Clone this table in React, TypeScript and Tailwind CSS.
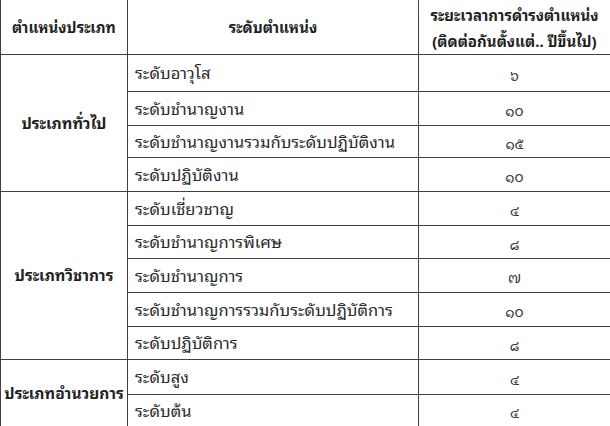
const groups = [
  {
    name: 'ประเภททั่วไป',
    rows: [
      { level: 'ระดับอาวุโส', years: '๖', h: 'h-[37px]' },
      { level: 'ระดับชำนาญงาน', years: '๑๐', h: 'h-[34px]' },
      { level: 'ระดับชำนาญงานรวมกับระดับปฏิบัติงาน', years: '๑๕', h: 'h-[32px]' },
      { level: 'ระดับปฏิบัติงาน', years: '๑๐', h: 'h-[34px]' },
    ],
  },
  {
    name: 'ประเภทวิชาการ',
    rows: [
      { level: 'ระดับเชี่ยวชาญ', years: '๔', h: 'h-[34px]' },
      { level: 'ระดับชำนาญการพิเศษ', years: '๘', h: 'h-[33px]' },
      { level: 'ระดับชำนาญการ', years: '๗', h: 'h-[34px]' },
      { level: 'ระดับชำนาญการรวมกับระดับปฏิบัติการ', years: '๑๐', h: 'h-[34px]' },
      { level: 'ระดับปฏิบัติการ', years: '๘', h: 'h-[33px]' },
    ],
  },
  {
    name: 'ประเภทอำนวยการ',
    rows: [
      { level: 'ระดับสูง', years: '๔', h: 'h-[35px]' },
      { level: 'ระดับต้น', years: '๔', h: 'h-[32px]' },
    ],
  },
]

export default function App() {
  return (
    <div className="w-[610px] h-[426px] bg-white overflow-hidden text-[#1f1f1f] font-['Noto_Sans_Thai_Looped','Tahoma','Noto_Sans_Thai','Noto_Sans',sans-serif]">
      <table className="w-[610px] table-fixed border-collapse leading-tight">
        <colgroup>
          <col className="w-[127px]" />
          <col className="w-[291px]" />
          <col className="w-[192px]" />
        </colgroup>
        <thead>
          <tr className="h-[54px] text-[15px]">
            <th className="border-x border-b border-[#3f3f3f] font-bold text-center align-middle">ตำแหน่งประเภท</th>
            <th className="border-x border-b border-[#3f3f3f] font-bold text-center align-middle">ระดับตำแหน่ง</th>
            <th className="border-x border-b border-[#3f3f3f] font-bold text-center align-middle leading-[26px]">
              ระยะเวลาการดำรงตำแหน่ง
              <br />
              (ติดต่อกันตั้งแต่.. ปีขึ้นไป)
            </th>
          </tr>
        </thead>
        <tbody>
          {groups.map(g =>
            g.rows.map((r, i) => (
              <tr key={r.level} className={r.h}>
                {i === 0 && (
                  <td rowSpan={g.rows.length} className="border border-[#3f3f3f] text-center align-middle font-bold text-[15.5px]">
                    {g.name}
                  </td>
                )}
                <td className="border border-[#3f3f3f] pl-[7px] align-middle text-[16.5px] text-[#2a2a2a]">{r.level}</td>
                <td className="border border-[#3f3f3f] text-center align-middle pt-[4px] text-[14px] text-[#333]">{r.years}</td>
              </tr>
            ))
          )}
        </tbody>
      </table>
    </div>
  )
}
